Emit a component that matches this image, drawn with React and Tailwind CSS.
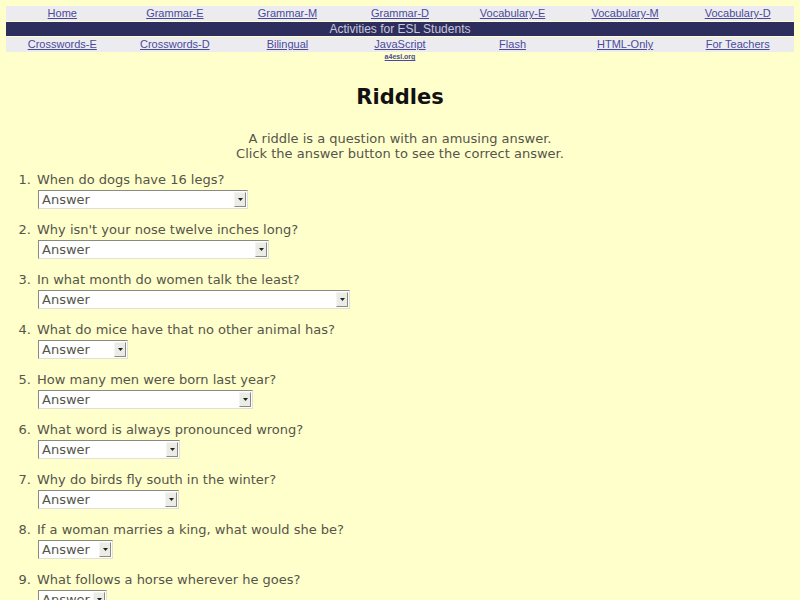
import React from "react";

const topLinks = ["Home", "Grammar-E", "Grammar-M", "Grammar-D", "Vocabulary-E", "Vocabulary-M", "Vocabulary-D"];
const bottomLinks = ["Crosswords-E", "Crosswords-D", "Bilingual", "JavaScript", "Flash", "HTML-Only", "For Teachers"];

const riddles = [
  { q: "When do dogs have 16 legs?", w: 210 },
  { q: "Why isn't your nose twelve inches long?", w: 231 },
  { q: "In what month do women talk the least?", w: 312 },
  { q: "What do mice have that no other animal has?", w: 90 },
  { q: "How many men were born last year?", w: 215 },
  { q: "What word is always pronounced wrong?", w: 142 },
  { q: "Why do birds fly south in the winter?", w: 141 },
  { q: "If a woman marries a king, what would she be?", w: 75 },
  { q: "What follows a horse wherever he goes?", w: 69 },
];

// fake dropdown, looks like an old-style select box
const AnswerBox = ({ width }) => (
  <div
    className="flex h-[19px] items-center border border-t-[#8a8a80] border-l-[#8a8a80] border-b-[#e0e0d8] border-r-[#e0e0d8] bg-white"
    style={{ width }}
  >
    <span className="flex-1 pl-[3px] text-[13px] leading-none text-[#55554a]">Answer</span>
    <span className="mr-[1px] flex h-[15px] w-[12px] items-center justify-center border border-t-[#f4f4f0] border-l-[#f4f4f0] border-b-[#8a8a80] border-r-[#8a8a80] bg-[#ecece6]">
      <svg width="5" height="3" viewBox="0 0 5 3">
        <path d="M0 0h5L2.5 3z" fill="#222" />
      </svg>
    </span>
  </div>
);

const NavRow = ({ links }) => (
  <div className="grid grid-cols-7 bg-[#ececf0] py-[1px]">
    {links.map((l) => (
      <a key={l} href="#" className="text-center text-[11px] leading-[13px] text-[#4a4a9a] underline">
        {l}
      </a>
    ))}
  </div>
);

export default function App() {
  return (
    <div className="min-h-[600px] bg-[#ffffcc] pt-[6px] font-['DejaVu_Sans',sans-serif]">
      <div className="mx-[6px] font-['Liberation_Sans',Arial,sans-serif]">
        <NavRow links={topLinks} />
        <div className="my-[1px] bg-[#2e2e5e] text-center text-[12px] leading-[14px] text-[#c8c8dc]">
          Activities for ESL Students
        </div>
        <NavRow links={bottomLinks} />
        <div className="grid grid-cols-7">
          <div className="col-start-4 text-center text-[7px] font-bold leading-[10px] text-[#4a4a9a] underline">
            a4esl.org
          </div>
        </div>
      </div>

      <h1 className="mt-[20px] text-center text-[21px] font-bold leading-[30px] text-[#111]">Riddles</h1>

      <div className="mt-[19px] text-center text-[13px] leading-[15px] text-[#55554a]">
        <p>A riddle is a question with an amusing answer.</p>
        <p>Click the answer button to see the correct answer.</p>
      </div>

      <ol className="mt-[11px]">
        {riddles.map((r, i) => (
          <li key={i} className="mb-[13px] flex text-[13px] leading-[16px] text-[#55554a]">
            <span className="w-[31px] text-right">{i + 1}.</span>
            <div className="ml-[6px]">
              <div>{r.q}</div>
              <div className="mt-[2px] ml-[1px]">
                <AnswerBox width={r.w} />
              </div>
            </div>
          </li>
        ))}
      </ol>
    </div>
  );
}
